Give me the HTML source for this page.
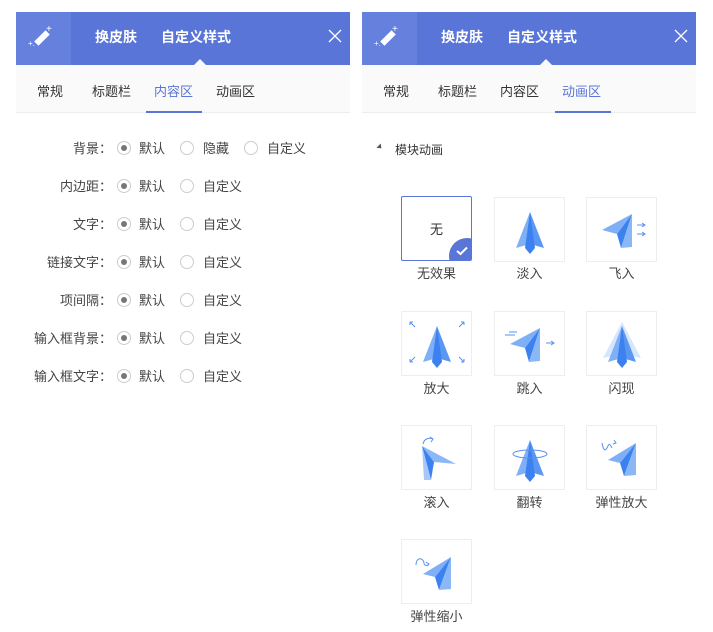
<!DOCTYPE html>
<html><head><meta charset="utf-8"><style>
*{margin:0;padding:0;box-sizing:border-box}
body{width:713px;height:632px;background:#fff;font-family:"Liberation Sans","Noto Sans CJK SC",sans-serif;font-size:13px;color:#333;position:relative;overflow:hidden}
.panel{position:absolute;top:12px;width:334px;height:620px}
.hd{height:53px;background:#5a75d8;position:relative;color:#fff}
.hd .ic{position:absolute;left:0;top:0;width:55px;height:53px;background:#6580dd}
.hd .t{position:absolute;top:15px;font-size:14px;font-weight:bold}
.hd .tri{position:absolute;top:47px;width:0;height:0;border-left:6px solid transparent;border-right:6px solid transparent;border-bottom:6px solid #fafafa}
.hd .x{position:absolute;right:8px;top:17px}
.tabs{height:48px;background:#fafafa;border-bottom:1px solid #eee;position:relative}
.tabs span{position:absolute;top:16px;font-size:13px;color:#333}
.tabs span.on{color:#5a75d8}
.tabs .ul{position:absolute;bottom:-1px;height:2px;background:#5a75d8}
.row{position:absolute;left:0;height:20px;font-size:13px}
.row .l{position:absolute;white-space:nowrap;top:-1px;color:#444}
.rd{position:absolute;top:2px;width:14px;height:14px;border:1px solid #ccc;border-radius:50%}
.rd.on::after{content:"";position:absolute;left:3px;top:3px;width:6px;height:6px;border-radius:50%;background:#777}
.row .tx{position:absolute;top:-1px;color:#444}
.box{position:absolute;width:71px;height:65px;border:1px solid #eee;background:#fff}
.lb{position:absolute;width:71px;text-align:center;font-size:13px;color:#444}
</style></head><body>
<svg width="0" height="0" style="position:absolute">
<defs>
<g id="up"><polygon points="35,14 21,50 35,46" fill="#7fb0f7"/><polygon points="35,14 49,50 35,46" fill="#5a97f2"/><polygon points="35,14 30,50 35,56 40,50" fill="#3b82f0"/></g>
</defs></svg>

<!-- LEFT -->
<div class="panel" style="left:16px">
 <div class="hd"><div class="ic"><svg width="55" height="53"><rect x="18" y="23" width="16" height="6" fill="#fff" transform="rotate(-45 26 26)"/><text x="30" y="20" fill="#fff" font-size="10">+</text><text x="12" y="34" fill="#fff" font-size="8">+.</text></svg></div>
 <span class="t" style="left:79px">换皮肤</span><span class="t" style="left:145px">自定义样式</span><div class="tri" style="left:178px"></div>
 <svg class="x" width="14" height="14"><path d="M1 1L13 13M13 1L1 13" stroke="#fff" stroke-width="1.3"/></svg></div>
 <div class="tabs"><span style="left:21px">常规</span><span style="left:76px">标题栏</span><span class="on" style="left:138px">内容区</span><span style="left:200px">动画区</span><div class="ul" style="left:130px;width:56px"></div></div>
</div>
<div style="position:absolute;left:16px;top:0;width:334px">
 <div class="row" style="top:139px;width:334px"><span class="l" style="right:238px">背景：</span><div class="rd on" style="left:101px"></div><span class="tx" style="left:123px">默认</span><div class="rd" style="left:164px"></div><span class="tx" style="left:187px">隐藏</span><div class="rd" style="left:228px"></div><span class="tx" style="left:251px">自定义</span></div>
 <div class="row" style="top:177px;width:334px"><span class="l" style="right:238px">内边距：</span><div class="rd on" style="left:101px"></div><span class="tx" style="left:123px">默认</span><div class="rd" style="left:164px"></div><span class="tx" style="left:187px">自定义</span></div>
 <div class="row" style="top:215px;width:334px"><span class="l" style="right:238px">文字：</span><div class="rd on" style="left:101px"></div><span class="tx" style="left:123px">默认</span><div class="rd" style="left:164px"></div><span class="tx" style="left:187px">自定义</span></div>
 <div class="row" style="top:253px;width:334px"><span class="l" style="right:238px">链接文字：</span><div class="rd on" style="left:101px"></div><span class="tx" style="left:123px">默认</span><div class="rd" style="left:164px"></div><span class="tx" style="left:187px">自定义</span></div>
 <div class="row" style="top:291px;width:334px"><span class="l" style="right:238px">项间隔：</span><div class="rd on" style="left:101px"></div><span class="tx" style="left:123px">默认</span><div class="rd" style="left:164px"></div><span class="tx" style="left:187px">自定义</span></div>
 <div class="row" style="top:329px;width:334px"><span class="l" style="right:238px">输入框背景：</span><div class="rd on" style="left:101px"></div><span class="tx" style="left:123px">默认</span><div class="rd" style="left:164px"></div><span class="tx" style="left:187px">自定义</span></div>
 <div class="row" style="top:367px;width:334px"><span class="l" style="right:238px">输入框文字：</span><div class="rd on" style="left:101px"></div><span class="tx" style="left:123px">默认</span><div class="rd" style="left:164px"></div><span class="tx" style="left:187px">自定义</span></div>
</div>

<!-- RIGHT -->
<div class="panel" style="left:362px">
 <div class="hd"><div class="ic"><svg width="55" height="53"><rect x="18" y="23" width="16" height="6" fill="#fff" transform="rotate(-45 26 26)"/><text x="30" y="20" fill="#fff" font-size="10">+</text><text x="12" y="34" fill="#fff" font-size="8">+.</text></svg></div>
 <span class="t" style="left:79px">换皮肤</span><span class="t" style="left:145px">自定义样式</span><div class="tri" style="left:178px"></div>
 <svg class="x" width="14" height="14"><path d="M1 1L13 13M13 1L1 13" stroke="#fff" stroke-width="1.3"/></svg></div>
 <div class="tabs"><span style="left:21px">常规</span><span style="left:76px">标题栏</span><span style="left:138px">内容区</span><span class="on" style="left:200px">动画区</span><div class="ul" style="left:193px;width:56px"></div></div>
 <div style="position:absolute;left:16px;top:132px;width:0;height:0;border-top:3px solid transparent;border-bottom:3px solid transparent;border-left:4px solid #555;transform:rotate(45deg)"></div>
 <div style="position:absolute;left:33px;top:129px;font-size:12px;color:#333">模块动画</div>
</div>

<div style="position:absolute;left:0;top:0">
 <div class="box" style="left:401px;top:196px;border:1px solid #5a75d8;border-radius:2px;overflow:hidden"><div style="position:absolute;width:100%;top:22px;text-align:center;font-size:13px">无</div><div style="position:absolute;right:-14px;bottom:-14px;width:36px;height:36px;border-radius:50%;background:#5a75d8"></div><svg style="position:absolute;right:3px;bottom:4px" width="12" height="10"><path d="M1 5L4.5 8L11 1.5" stroke="#fff" stroke-width="2" fill="none"/></svg></div>
 <div class="lb" style="left:401px;top:263px">无效果</div>

 <div class="box" style="left:494px;top:197px"><svg width="70" height="64"><use href="#up"/></svg></div>
 <div class="lb" style="left:494px;top:263px">淡入</div>
 <div class="box" style="left:586px;top:197px"><svg width="70" height="64"><polygon points="45,16 15,32 30,36" fill="#7fb0f7"/><polygon points="45,16 30,36 34,50" fill="#3b82f0"/><polygon points="45,16 34,50 45,49" fill="#8ab8f7"/><path d="M50 27h8M55 25l3 2-3 2M50 36h8M55 34l3 2-3 2" stroke="#5a90ee" fill="none"/></svg></div>
 <div class="lb" style="left:586px;top:263px">飞入</div>

 <div class="box" style="left:401px;top:311px"><svg width="70" height="64"><use href="#up"/><path d="M8 10l5 5M8 10v3M8 10h3M62 10l-5 5M62 10v3M62 10h-3M8 50l5-5M8 50v-3M8 50h3M62 50l-5-5M62 50v-3M62 50h-3" stroke="#5a90ee" fill="none"/></svg></div>
 <div class="lb" style="left:401px;top:378px">放大</div>
 <div class="box" style="left:494px;top:311px"><svg width="70" height="64"><polygon points="45,16 15,32 30,36" fill="#7fb0f7"/><polygon points="45,16 30,36 34,50" fill="#3b82f0"/><polygon points="45,16 34,50 45,49" fill="#8ab8f7"/><path d="M10 23h10M14 20h8M51 31h8M56 29l3 2-3 2" stroke="#5a90ee" fill="none"/></svg></div>
 <div class="lb" style="left:494px;top:378px">跳入</div>
 <div class="box" style="left:586px;top:311px"><svg width="70" height="64"><polygon points="35,10 16,46 35,42 54,46" fill="#d6e6fc"/><use href="#up"/></svg></div>
 <div class="lb" style="left:586px;top:378px">闪现</div>

 <div class="box" style="left:401px;top:425px"><svg width="70" height="64"><polygon points="20,20 54,38 32,36" fill="#8ab8f7"/><polygon points="20,20 32,36 29,54" fill="#3b82f0"/><polygon points="20,20 29,54 22,54" fill="#a6c8f9"/><path d="M21 18c1-5 6-7 10-5M28 11l3 2-2 3" stroke="#5a90ee" fill="none"/></svg></div>
 <div class="lb" style="left:401px;top:492px">滚入</div>
 <div class="box" style="left:494px;top:425px"><svg width="70" height="64"><use href="#up"/><ellipse cx="35" cy="28" rx="17" ry="4" stroke="#5a90ee" fill="none"/></svg></div>
 <div class="lb" style="left:494px;top:492px">翻转</div>
 <div class="box" style="left:586px;top:425px"><svg width="70" height="64"><polygon points="49,17 21,34 33,37" fill="#7fb0f7"/><polygon points="49,17 33,37 37,50" fill="#3b82f0"/><polygon points="49,17 37,50 49,49" fill="#8ab8f7"/><path d="M15 17c1 6 3 9 5 5s2-6 5 0M27 14l2 3-3 1" stroke="#5a90ee" fill="none"/></svg></div>
 <div class="lb" style="left:586px;top:492px">弹性放大</div>

 <div class="box" style="left:401px;top:539px"><svg width="70" height="64"><polygon points="49,17 21,34 33,37" fill="#7fb0f7"/><polygon points="49,17 33,37 37,50" fill="#3b82f0"/><polygon points="49,17 37,50 49,49" fill="#8ab8f7"/><path d="M14 25c0-8 7-8 8-2M22 23c0 3 4 3 5 1M24 22l3 2-2 2" stroke="#5a90ee" fill="none"/></svg></div>
 <div class="lb" style="left:401px;top:606px">弹性缩小</div>
</div>
</body></html>
